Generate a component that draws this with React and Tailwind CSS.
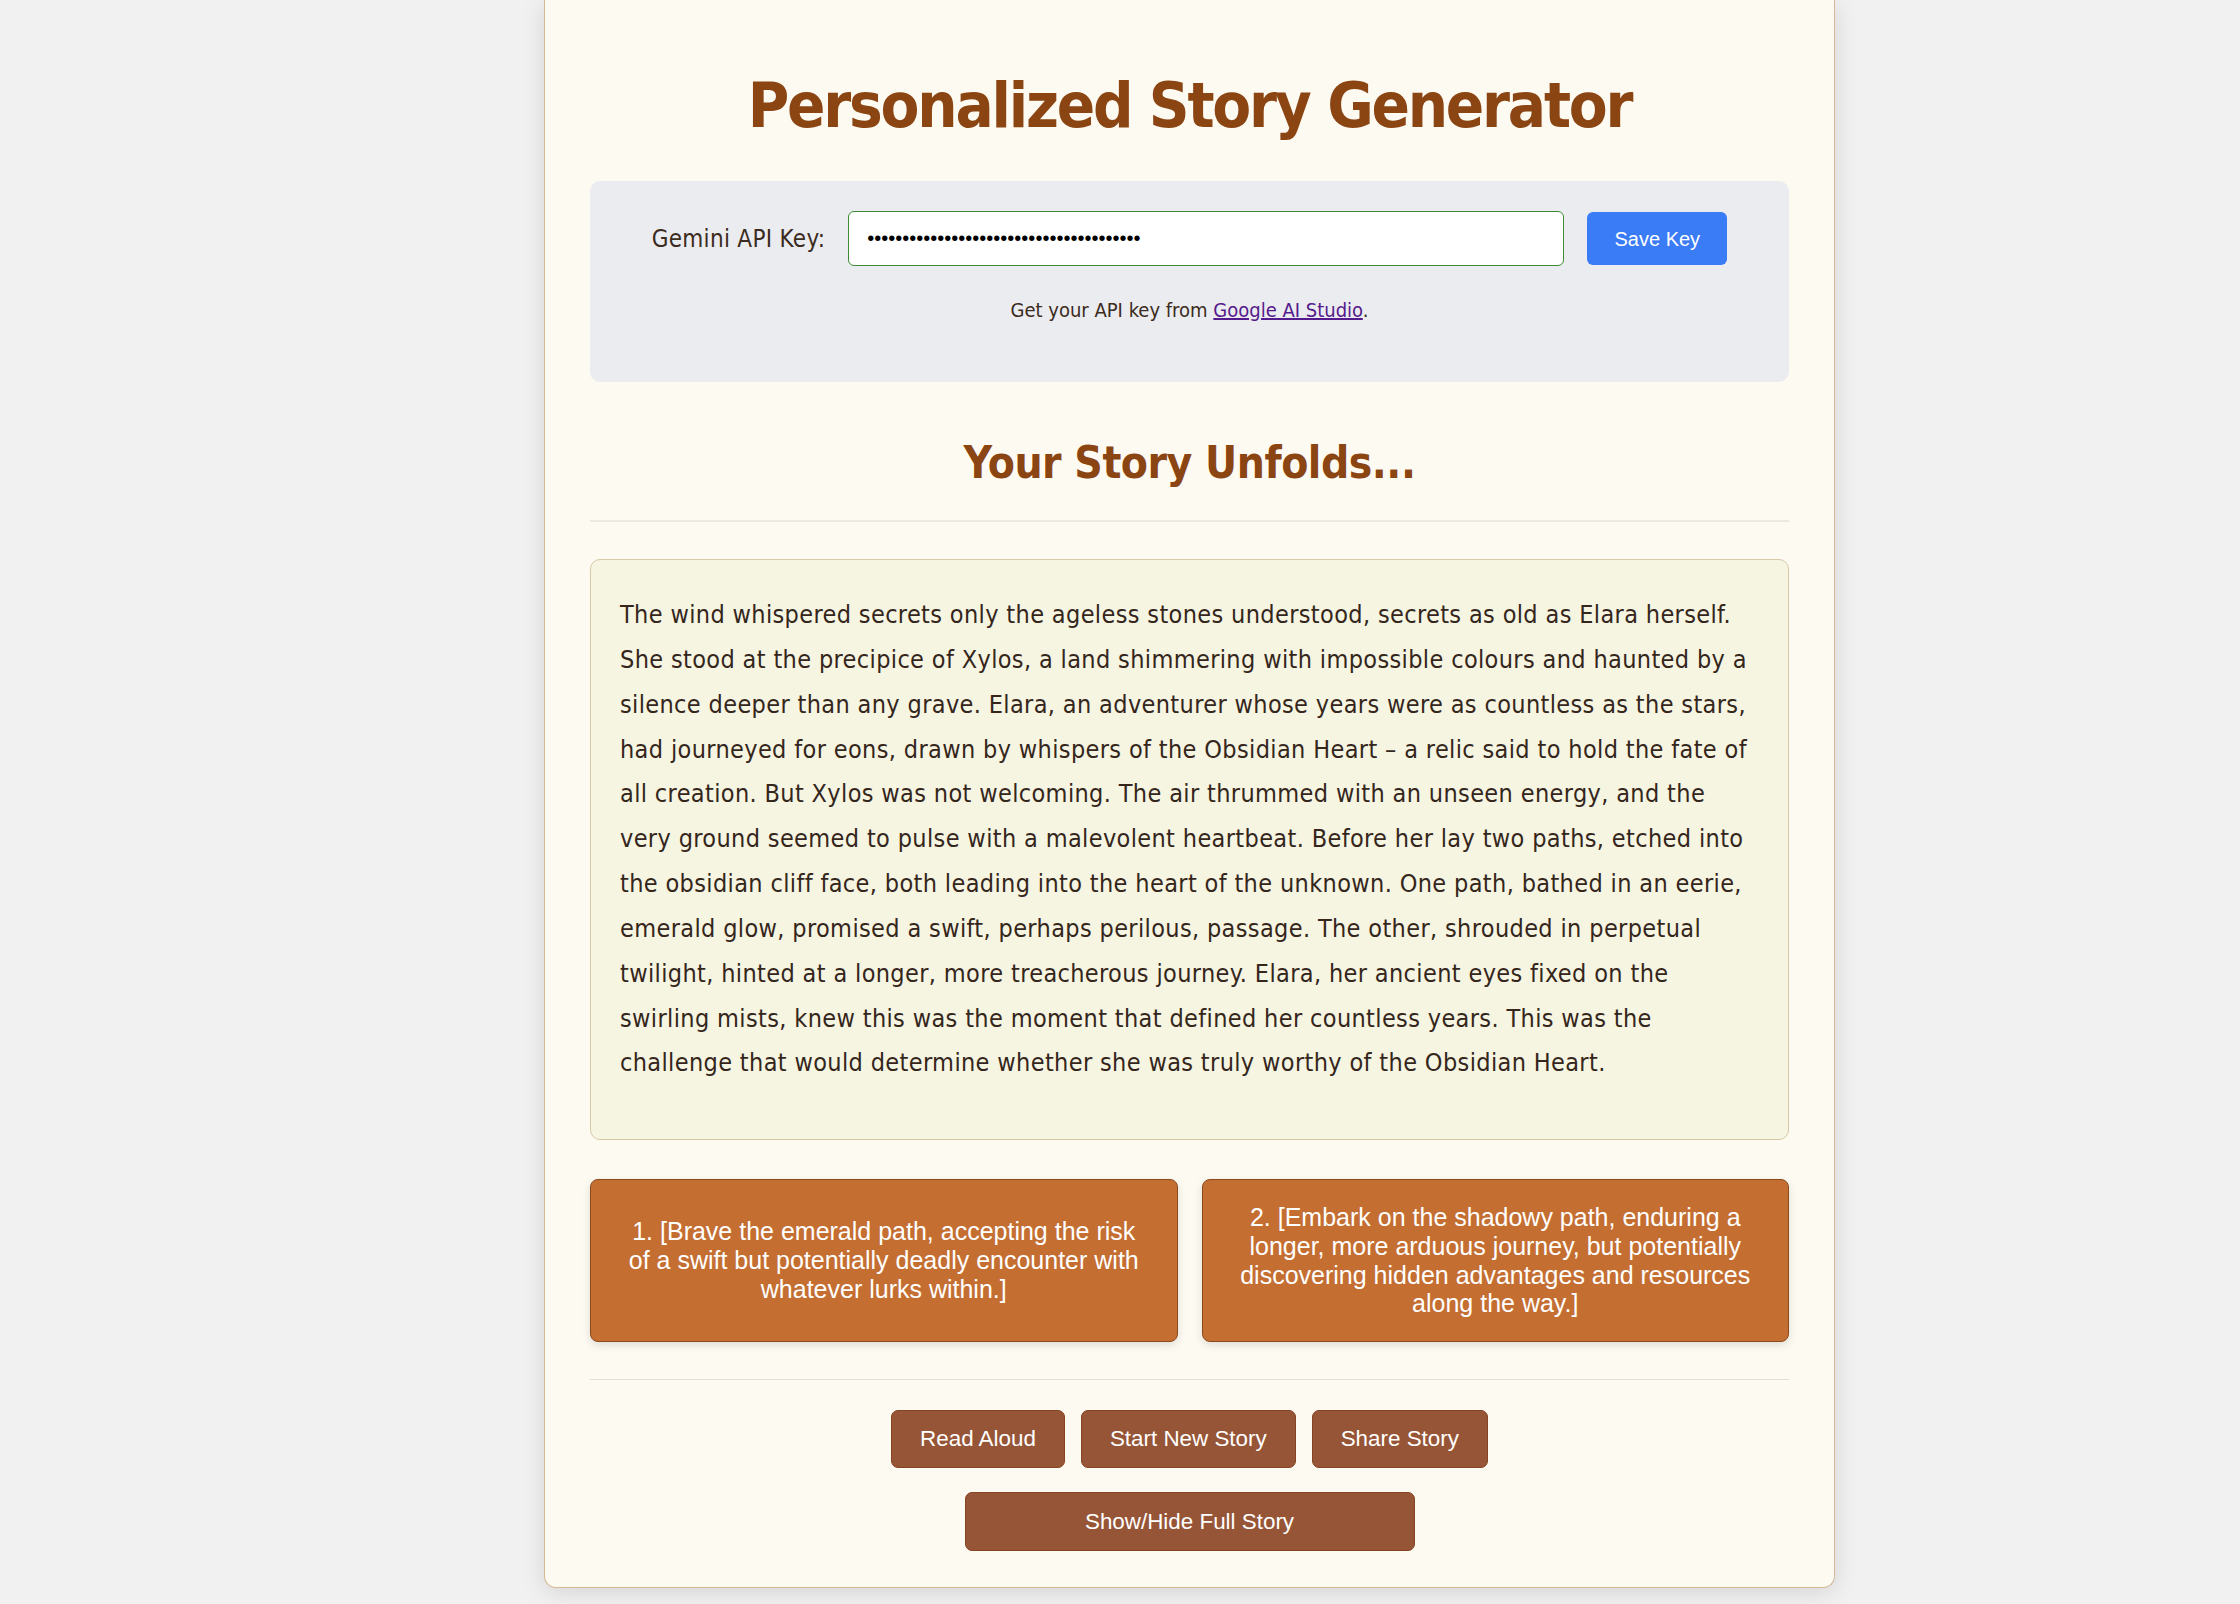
import React from "react";

const tahoma = "font-['DejaVu_Sans_Condensed','DejaVu_Sans',sans-serif]";
const arial = "font-['Liberation_Sans',Arial,sans-serif]";

const storyLines = [
  "The wind whispered secrets only the ageless stones understood, secrets as old as Elara herself.",
  "She stood at the precipice of Xylos, a land shimmering with impossible colours and haunted by a",
  "silence deeper than any grave. Elara, an adventurer whose years were as countless as the stars,",
  "had journeyed for eons, drawn by whispers of the Obsidian Heart \u2013 a relic said to hold the fate of",
  "all creation. But Xylos was not welcoming. The air thrummed with an unseen energy, and the",
  "very ground seemed to pulse with a malevolent heartbeat. Before her lay two paths, etched into",
  "the obsidian cliff face, both leading into the heart of the unknown. One path, bathed in an eerie,",
  "emerald glow, promised a swift, perhaps perilous, passage. The other, shrouded in perpetual",
  "twilight, hinted at a longer, more treacherous journey. Elara, her ancient eyes fixed on the",
  "swirling mists, knew this was the moment that defined her countless years. This was the",
  "challenge that would determine whether she was truly worthy of the Obsidian Heart.",
];

export default function App() {
  return (
    <div className={`min-h-[1604px] bg-[#f1f1f1] ${tahoma} text-[#3b2b20]`}>
      <div className="ml-[544px] w-[1291px] bg-[#fdfaf2] border border-t-0 border-[#d6b896] rounded-b-[12px] shadow-[0_4px_24px_rgba(0,0,0,0.12)] px-[45px] pt-[56px] pb-[36px]">
        <h1 className="h-[100px] leading-[100px] text-center text-[63px] font-bold text-[#8b4513] tracking-[-2.2px]">
          Personalized Story Generator
        </h1>

        <div className="mt-[25px] h-[201px] rounded-[10px] bg-[#ebecf0] pt-[30px]">
          <div className="flex items-center justify-center gap-[23px] h-[55px]">
            <label className="text-[24px] tracking-[0.3px] text-[#3b2b20]">Gemini API Key:</label>
            <input
              type="password"
              readOnly
              value={"x".repeat(39)}
              className={`w-[716px] h-[55px] rounded-[6px] border border-[#3e8a34] bg-white pl-[18px] pr-[16px] text-[20px] ${arial} text-black outline-none`}
            />
            <button className={`w-[140px] h-[53px] rounded-[6px] bg-[#3a7bf6] text-white text-[20px] ${arial}`}>
              Save Key
            </button>
          </div>
          <p className="mt-[29px] text-center text-[20px] leading-[30px] text-[#3b2b20]">
            Get your API key from{" "}
            <a href="#" className="text-[#551a8b] underline">
              Google AI Studio
            </a>
            .
          </p>
        </div>

        <h2 className="mt-[51px] h-[60px] leading-[60px] text-center text-[44px] font-bold text-[#8b4513] tracking-[-0.5px]">
          Your Story Unfolds...
        </h2>
        <div className="mt-[27px] h-[2px] bg-[#ece9e2]" />

        <div className="mt-[37px] h-[581px] rounded-[10px] border border-[#d9c8a8] bg-[#f5f5e2] px-[29px] pt-[33px]">
          <p className="text-[25px] leading-[44.85px] tracking-[0.36px] text-[#35261c]">
            {storyLines.map((l, i) => (
              <span key={i} className="block whitespace-nowrap">
                {l}
              </span>
            ))}
          </p>
        </div>

        <div className="mt-[39px] grid grid-cols-2 gap-[24px]">
          <button className={`h-[163px] flex items-center justify-center rounded-[8px] border border-[#8b4a1e] bg-[#c46e32] px-[30px] text-white text-[25px] leading-[1.15] ${arial} shadow-[0_3px_8px_rgba(0,0,0,0.12)]`}>
            1. [Brave the emerald path, accepting the risk of a swift but potentially deadly encounter with whatever lurks within.]
          </button>
          <button className={`h-[163px] flex items-center justify-center rounded-[8px] border border-[#8b4a1e] bg-[#c46e32] px-[30px] text-white text-[25px] leading-[1.15] ${arial} shadow-[0_3px_8px_rgba(0,0,0,0.12)]`}>
            2. [Embark on the shadowy path, enduring a longer, more arduous journey, but potentially discovering hidden advantages and resources along the way.]
          </button>
        </div>

        <div className="mt-[37px] h-px bg-[#e4ddd2]" />

        <div className={`mt-[30px] flex justify-center gap-[16px] ${arial}`}>
          <button className="h-[58px] px-[28px] rounded-[7px] border border-[#84441f] bg-[#965536] text-white text-[22.4px]">
            Read Aloud
          </button>
          <button className="h-[58px] px-[28px] rounded-[7px] border border-[#84441f] bg-[#965536] text-white text-[22.4px]">
            Start New Story
          </button>
          <button className="h-[58px] px-[28px] rounded-[7px] border border-[#84441f] bg-[#965536] text-white text-[22.4px]">
            Share Story
          </button>
        </div>
        <div className={`mt-[24px] flex justify-center ${arial}`}>
          <button className="w-[450px] h-[59px] rounded-[7px] border border-[#84441f] bg-[#965536] text-white text-[22.4px]">
            Show/Hide Full Story
          </button>
        </div>
      </div>
    </div>
  );
}
